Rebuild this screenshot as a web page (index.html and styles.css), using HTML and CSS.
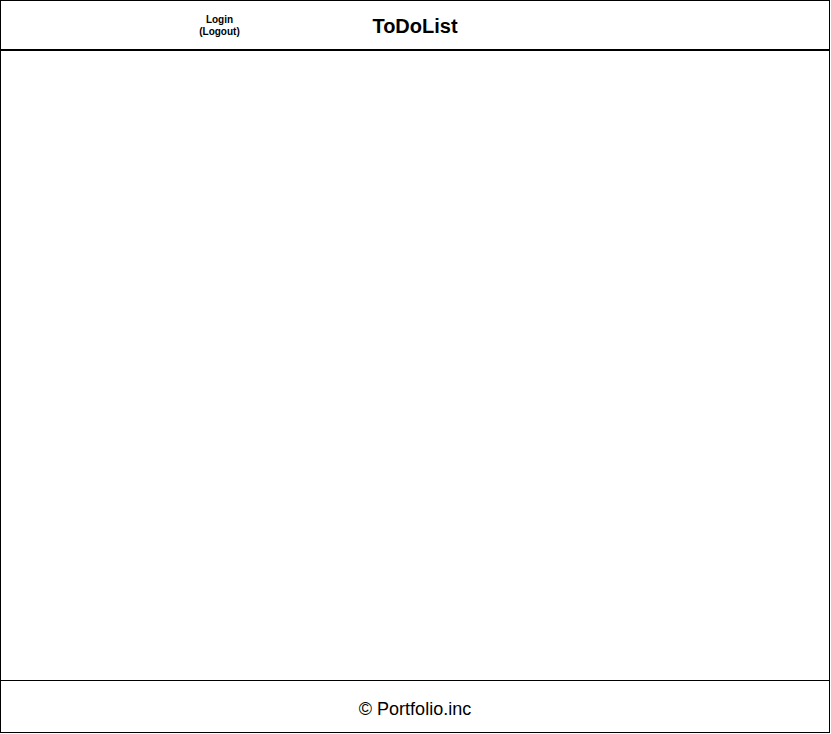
FILE: index.html
```html
<!DOCTYPE html>
<html lang="en">
<head>
<meta charset="utf-8">
<title>ToDoList</title>
<link rel="stylesheet" href="styles.css">
</head>
<body>
<div class="page">
  <header class="header">
    <div class="auth">Login<br>(Logout)</div>
    <h1 class="title">ToDoList</h1>
  </header>
  <main class="main"></main>
  <footer class="footer">© Portfolio.inc</footer>
</div>
</body>
</html>
```
FILE: styles.css
```css
html, body {
  margin: 0;
  padding: 0;
  background: #fff;
}
body {
  font-family: "Liberation Sans", Arial, sans-serif;
  color: #000;
}
.page {
  box-sizing: border-box;
  width: 830px;
  height: 733px;
  border: 1px solid #000;
  display: flex;
  flex-direction: column;
}
.header {
  height: 48px;
  border-bottom: 1px solid #000;
  display: flex;
  align-items: center;
  flex: none;
}
.auth {
  width: 80px;
  margin-left: 178.5px;
  text-align: center;
  font-size: 10px;
  font-weight: bold;
  line-height: 12px;
  padding-top: 2px;
}
.title {
  width: 311px;
  margin: 0;
  text-align: center;
  font-size: 20px;
  font-weight: bold;
  line-height: 23px;
  padding-top: 2px;
}
.main {
  flex: 1;
  border-top: 1px solid #000;
}
.footer {
  flex: none;
  height: 52px;
  box-sizing: border-box;
  border-top: 1px solid #000;
  display: flex;
  align-items: center;
  justify-content: center;
  font-size: 18px;
  padding-top: 6px;
}
```
